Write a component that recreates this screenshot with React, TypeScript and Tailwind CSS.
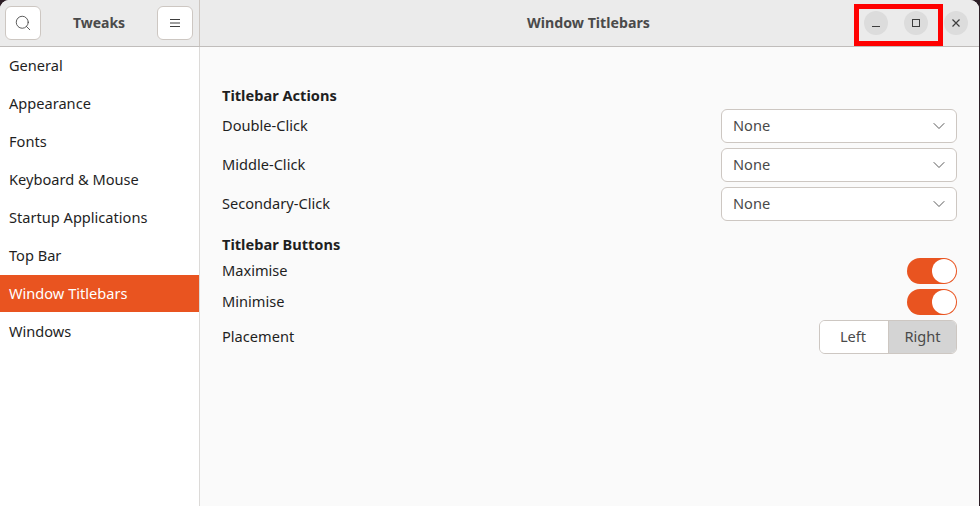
import { Search, ChevronDown } from 'lucide-react'

const NAV = ['General', 'Appearance', 'Fonts', 'Keyboard & Mouse', 'Startup Applications', 'Top Bar', 'Window Titlebars', 'Windows']
const ACTIONS = ['Double-Click', 'Middle-Click', 'Secondary-Click']

function HeaderButton({ children }: { children: React.ReactNode }) {
  return (
    <button className="flex h-[34px] w-[36px] items-center justify-center rounded-[6px] border border-[#cdc7c2] bg-white text-[#3d3d3d]">
      {children}
    </button>
  )
}

function WindowButton({ children }: { children: React.ReactNode }) {
  return (
    <div className="flex h-6 w-6 items-center justify-center rounded-full bg-[#dcdcdc] text-[#3d3d3d]">
      {children}
    </div>
  )
}

function Switch() {
  return (
    <div className="flex h-[26px] w-[50px] items-center justify-end rounded-full bg-[#e95420] pr-[1px]">
      <div className="h-6 w-6 rounded-full bg-white" />
    </div>
  )
}

function Combo() {
  return (
    <div className="flex h-[34px] w-[236px] items-center justify-between rounded-[6px] border border-[#cdc7c2] bg-white pl-[11px] pr-[7px] text-[#4a4a4a]">
      <span>None</span>
      <ChevronDown size={20} strokeWidth={1.1} />
    </div>
  )
}

export default function App() {
  return (
    <div className="h-[506px] w-[980px] bg-[#2c1e26]">
      <div className="relative flex h-[506px] w-[979px] flex-col overflow-hidden rounded-t-[9px] bg-[#fafafa] font-['Noto_Sans',sans-serif] text-[14.6px] text-[#1f1f1f]">
        <header className="flex h-[47px] shrink-0 border-b border-[#c0bdbb] bg-[#ebebeb]">
          <div className="flex w-[200px] items-center justify-between border-r border-[#cdc7c2] pl-[5px] pr-[6px]">
            <HeaderButton><Search size={18} strokeWidth={1.1} /></HeaderButton>
            <span className="pb-[1px] text-[14px] font-bold text-[#4a4a4a]">Tweaks</span>
            <HeaderButton>
              <svg width="12" height="10" viewBox="0 0 12 10" stroke="currentColor" strokeWidth="1">
                <path d="M1 1.5H11M1 5H11M1 8.5H11" />
              </svg>
            </HeaderButton>
          </div>
          <div className="relative flex flex-1 items-center justify-center">
            <span className="pb-[1px] pr-[2px] text-[14.2px] font-bold text-[#4a4a4a]">Window Titlebars</span>
            <div className="absolute right-[11px] top-[11px] flex gap-[16px]">
              <WindowButton>
                <svg width="10" height="10" viewBox="0 0 10 10" stroke="currentColor" strokeWidth="1">
                  <path d="M1 8.5H9" />
                </svg>
              </WindowButton>
              <WindowButton>
                <svg width="10" height="10" viewBox="0 0 10 10" fill="none" stroke="currentColor" strokeWidth="1">
                  <rect x="1.5" y="1.5" width="7" height="7" />
                </svg>
              </WindowButton>
              <WindowButton>
                <svg width="10" height="10" viewBox="0 0 10 10" stroke="currentColor" strokeWidth="1.2">
                  <path d="M1.5 1.5L8.5 8.5M8.5 1.5L1.5 8.5" />
                </svg>
              </WindowButton>
            </div>
          </div>
        </header>

        <div className="flex min-h-0 flex-1">
          <aside className="w-[200px] shrink-0 border-r border-[#dcdad8] bg-white">
            {NAV.map(n => (
              <div
                key={n}
                className={n === 'Window Titlebars'
                  ? 'mb-[1px] flex h-[37px] items-center bg-[#e95420] pl-[9px] text-white'
                  : 'flex h-[38px] items-center pl-[9px]'}
              >
                {n}
              </div>
            ))}
          </aside>

          <main className="flex-1 pl-[22px] pr-[22px] pt-[38px]">
            <h2 className="h-[20px] font-bold leading-[20px]">Titlebar Actions</h2>
            <div className="mt-[4px] flex flex-col gap-[5px]">
              {ACTIONS.map(a => (
                <div key={a} className="flex items-center justify-between">
                  <span>{a}</span>
                  <Combo />
                </div>
              ))}
            </div>

            <h2 className="mt-[13px] h-[20px] font-bold leading-[20px]">Titlebar Buttons</h2>
            <div className="mt-[4px] flex flex-col gap-[5px]">
              <div className="flex items-center justify-between">
                <span>Maximise</span>
                <Switch />
              </div>
              <div className="flex items-center justify-between">
                <span>Minimise</span>
                <Switch />
              </div>
              <div className="flex items-center justify-between">
                <span>Placement</span>
                <div className="flex h-[34px] w-[138px] overflow-hidden rounded-[6px] border border-[#cdc7c2] text-[#4a4a4a]">
                  <div className="flex w-[69px] items-center justify-center border-r border-[#cdc7c2] bg-white pr-[2px]">Left</div>
                  <div className="flex flex-1 items-center justify-center bg-[#d4d4d4]">Right</div>
                </div>
              </div>
            </div>
          </main>
        </div>

        <div className="absolute left-[854px] top-[4px] h-[42px] w-[89px] border-[5px] border-[#ff0000]" />
      </div>
    </div>
  )
}
